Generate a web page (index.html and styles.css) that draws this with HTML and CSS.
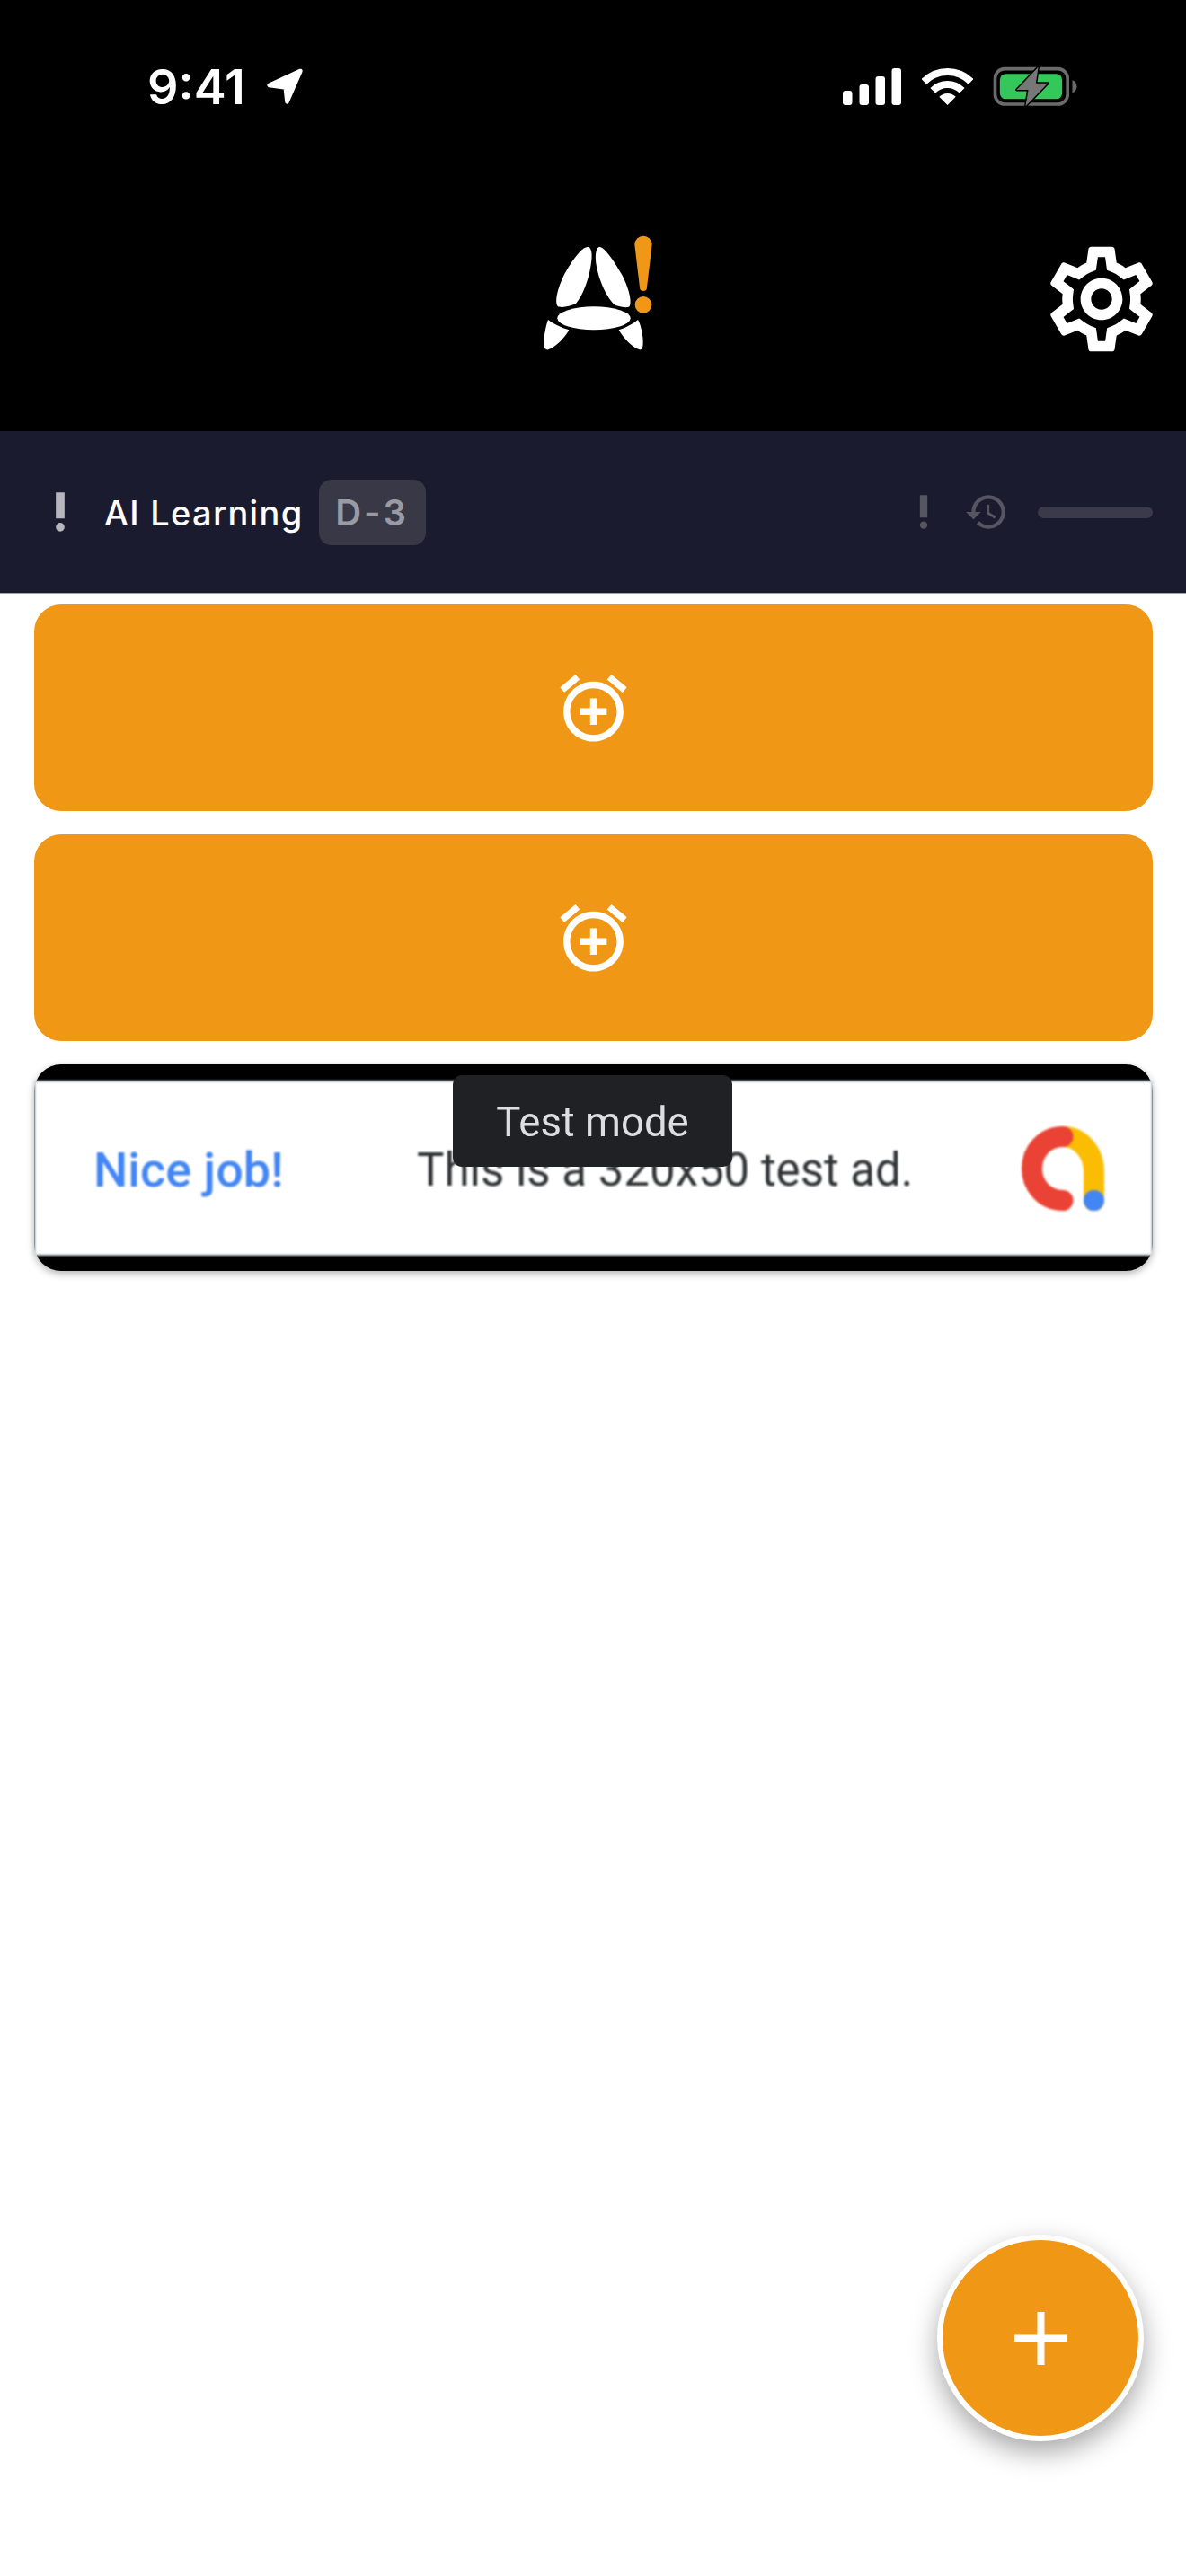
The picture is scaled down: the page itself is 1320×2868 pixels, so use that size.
FILE: index.html
```html
<!DOCTYPE html>
<html lang="en">
<head>
<meta charset="utf-8">
<title>AI Learning</title>
<link rel="stylesheet" href="styles.css">
</head>
<body>
<div class="page">
  <header class="header">
    <div class="status">
      <div class="status-left">
        <span class="time">9:41</span>
        <svg class="loc" viewBox="500 105 145 140"><polygon points="625,122 520,170 575,178 580,226" fill="#fff" stroke="#fff" stroke-width="14" stroke-linejoin="round"/></svg>
      </div>
      <div class="status-right">
        <svg class="signal" viewBox="0 0 65 41"><rect x="0" y="25" width="10.5" height="16" rx="3" fill="#fff"/><rect x="18.5" y="18" width="10.5" height="23" rx="3" fill="#fff"/><rect x="36.5" y="9" width="10.5" height="32" rx="3" fill="#fff"/><rect x="54.5" y="0" width="10.5" height="41" rx="3" fill="#fff"/></svg>
        <svg class="wifi" viewBox="0 0 57 41"><path d="M2.34 14.84A37 37 0 0 1 54.66 14.84M12.24 24.74A23 23 0 0 1 44.76 24.74" fill="none" stroke="#fff" stroke-width="8"/><path d="M28.5 41L19.3 31.8A13 13 0 0 1 37.7 31.8Z" fill="#fff"/></svg>
        <svg class="battery" viewBox="610 60 290 159"><rect x="620" y="80" width="242" height="118" rx="32" fill="none" stroke="#6b6b6b" stroke-width="11"/><rect x="636" y="97" width="208" height="84" rx="20" fill="#34c759"/><path d="M878 118c10 3 15 12 15 21s-5 18-15 21z" fill="#6b6b6b"/><path d="M764 74L692 150H731L722 205L796 128H756Z" fill="#777" stroke="#000" stroke-width="9" stroke-linejoin="round" paint-order="stroke"/></svg>
      </div>
    </div>
    <div class="brand">
      <div></div>
      <svg class="logo" viewBox="0 0 540 510">
        <path fill="#fff" d="M255 105C268 110 268 140 262 170C255 215 235 270 212 295C195 302 165 310 152 303C140 285 155 235 175 195C200 150 235 100 255 105Z"/>
        <path fill="#fff" d="M290 105C278 110 276 140 282 170C290 215 315 275 345 300C365 305 385 310 392 303C402 285 385 230 365 195C340 150 305 100 290 105Z"/>
        <ellipse fill="#fff" cx="273" cy="343" rx="122" ry="39"/>
        <path fill="#fff" d="M120 348C135 360 165 375 190 382C175 410 145 440 120 448C105 450 105 430 107 405C110 385 115 360 120 348Z"/>
        <path fill="#fff" d="M420 348C405 360 380 375 356 382C372 410 400 440 425 448C438 450 438 430 436 405C433 385 428 360 420 348Z"/>
        <path fill="#f09816" d="M409 97a29 29 0 0 1 58 0L450 240a12 12 0 0 1-24 0Z"/>
        <circle fill="#f09816" cx="438" cy="298" r="28"/>
      </svg>
      <svg class="gear" viewBox="0 0 24 24"><path fill="#fff" d="M19.43 12.98c.04-.32.07-.64.07-.98 0-.34-.03-.66-.07-.98l2.11-1.65c.19-.15.24-.42.12-.64l-2-3.46c-.09-.16-.26-.25-.44-.25-.06 0-.12.01-.17.03l-2.49 1c-.52-.4-1.08-.73-1.69-.98l-.38-2.65C14.46 2.18 14.25 2 14 2h-4c-.25 0-.46.18-.49.42l-.38 2.65c-.61.25-1.17.59-1.69.98l-2.49-1c-.06-.02-.12-.03-.18-.03-.17 0-.34.09-.43.25l-2 3.46c-.13.22-.07.49.12.64l2.11 1.65c-.04.32-.07.65-.07.98 0 .33.03.66.07.98l-2.11 1.65c-.19.15-.24.42-.12.64l2 3.46c.09.16.26.25.44.25.06 0 .12-.01.17-.03l2.49-1c.52.4 1.08.73 1.69.98l.38 2.65c.03.24.24.42.49.42h4c.25 0 .46-.18.49-.42l.38-2.65c.61-.25 1.17-.59 1.69-.98l2.49 1c.06.02.12.03.18.03.17 0 .34-.09.43-.25l2-3.46c.12-.22.07-.49-.12-.64l-2.11-1.65zm-1.98-1.71c.04.31.05.52.05.73 0 .21-.02.43-.05.73l-.14 1.13.89.7 1.08.84-.7 1.21-1.27-.51-1.04-.42-.9.68c-.43.32-.84.56-1.25.73l-1.06.43-.16 1.13-.2 1.35h-1.4l-.19-1.35-.16-1.13-1.06-.43c-.43-.18-.83-.41-1.23-.71l-.91-.7-1.06.43-1.27.51-.7-1.21 1.08-.84.89-.7-.14-1.13c-.03-.31-.05-.54-.05-.74s.02-.43.05-.73l.14-1.13-.89-.7-1.08-.84.7-1.21 1.27.51 1.04.42.9-.68c.43-.32.84-.56 1.25-.73l1.06-.43.16-1.13.2-1.35h1.39l.19 1.35.16 1.13 1.06.43c.43.18.83.41 1.23.71l.91.7 1.06-.43 1.27-.51.7 1.21-1.07.85-.89.7.14 1.13zM12 8c-2.21 0-4 1.79-4 4s1.79 4 4 4 4-1.79 4-4-1.79-4-4-4zm0 6c-1.1 0-2-.9-2-2s.9-2 2-2 2 .9 2 2-.9 2-2 2z"/></svg>
    </div>
  </header>

  <section class="bar">
    <svg class="prio prio-on" viewBox="0 0 24 24"><circle cx="12" cy="19" r="2"/><path d="M10 3h4v12h-4z"/></svg>
    <span class="bar-title">AI Learning</span>
    <span class="badge">D-3</span>
    <div class="bar-tools">
      <svg class="prio-small" viewBox="0 0 24 24"><circle cx="12" cy="19" r="2"/><path d="M10 3h4v12h-4z"/></svg>
      <svg class="history" viewBox="0 0 24 24"><path d="M13 3c-4.97 0-9 4.03-9 9H1l3.89 3.89.07.14L9 12H6c0-3.87 3.13-7 7-7s7 3.13 7 7-3.13 7-7 7c-1.93 0-3.68-.79-4.94-2.06l-1.42 1.42C8.27 19.99 10.51 21 13 21c4.97 0 9-4.03 9-9s-4.03-9-9-9zm-1 5v5l4.28 2.54.72-1.21-3.5-2.08V8H12z"/></svg>
      <div class="progress"></div>
    </div>
  </section>

  <main class="list">
    <div class="card-alarm"><svg class="alarm" viewBox="0 0 24 24"><path d="M7.88 3.39L6.6 1.86 2 5.71l1.29 1.53 4.59-3.85zM22 5.72l-4.6-3.86-1.29 1.53 4.6 3.86L22 5.72zM12 4c-4.97 0-9 4.03-9 9s4.02 9 9 9c4.97 0 9-4.03 9-9s-4.03-9-9-9zm0 16c-3.87 0-7-3.13-7-7s3.13-7 7-7 7 3.13 7 7-3.13 7-7 7zm1-11h-2v3H8v2h3v3h2v-3h3v-2h-3V9z"/></svg></div>
    <div class="card-alarm"><svg class="alarm" viewBox="0 0 24 24"><path d="M7.88 3.39L6.6 1.86 2 5.71l1.29 1.53 4.59-3.85zM22 5.72l-4.6-3.86-1.29 1.53 4.6 3.86L22 5.72zM12 4c-4.97 0-9 4.03-9 9s4.02 9 9 9c4.97 0 9-4.03 9-9s-4.03-9-9-9zm0 16c-3.87 0-7-3.13-7-7s3.13-7 7-7 7 3.13 7 7-3.13 7-7 7zm1-11h-2v3H8v2h3v3h2v-3h3v-2h-3V9z"/></svg></div>
    <div class="card-ad">
      <div class="ad">
        <span class="ad-nice">Nice job!</span>
        <span class="ad-text">This is a 320x50 test ad.</span>
        <svg class="ad-logo" viewBox="1137 1253 92 94">
          <path d="M1183 1264.5C1204 1264.5 1217.500 1284 1217.500 1303V1336" fill="none" stroke="#fbbc04" stroke-width="23" stroke-linecap="round"/>
          <path d="M1183 1264.500C1162 1264.500 1148.500 1282 1148.500 1300C1148.500 1318 1162 1335.500 1183 1335.500" fill="none" stroke="#ea4335" stroke-width="23" stroke-linecap="round"/>
          <circle cx="1217.500" cy="1335.500" r="11.500" fill="#4285f4"/>
        </svg>
      </div>
      <div class="tooltip"><span class="tooltip-text">Test mode</span></div>
    </div>
  </main>

  <button class="fab" type="button" aria-label="Add"><svg class="fab-plus" viewBox="0 0 59 59"><path d="M25.500 0h8v25.500H59v8H33.500V59h-8V33.500H0v-8h25.500z"/></svg></button>
</div>
</body>
</html>
```

FILE: styles.css
```css
* { box-sizing: border-box; }
html, body { margin: 0; padding: 0; background: #fff; }
.page { position: relative; width: 1320px; height: 2868px; overflow: hidden; background: #fff; font-family: Inter, "Liberation Sans", sans-serif; }

.header { height: 480px; background: #000; display: flex; flex-direction: column; }
.status { height: 240px; padding: 70px 119px 0 164px; display: flex; justify-content: space-between; align-items: flex-start; }
.status-left { display: flex; align-items: center; gap: 20px; height: 53px; }
.status-right { display: flex; align-items: center; height: 53px; }
.time { color: #fff; font-size: 54px; font-weight: 600; line-height: 53px; letter-spacing: 0; }
.loc { width: 48px; height: 47px; }
.signal { width: 65px; height: 41px; }
.wifi { width: 57px; height: 41px; margin-left: 23px; }
.battery { width: 97px; height: 53px; margin-left: 21px; }

.brand { height: 170px; display: grid; grid-template-columns: 1fr 180px 1fr; padding: 0 24px; }
.logo { width: 180px; height: 170px; display: block; }
.gear { width: 140px; height: 140px; justify-self: end; margin-top: 23px; display: block; }

.bar { height: 181px; background: #1a1b2e; border-bottom: 1px solid #a4a4ae; display: flex; align-items: center; padding: 0 37px 0 38px; }
.prio { width: 58px; height: 58px; fill: #b6b6bc; flex: none; }
.bar-title { color: #fff; font-size: 38px; font-weight: 500; letter-spacing: 1.3px; margin-left: 20px; padding-top: 2px; }
.badge { margin-left: 17px; width: 119px; height: 73px; border-radius: 14px; background: #383846; color: #9a9aa5; font-size: 40px; font-weight: 600; letter-spacing: 3px; display: flex; align-items: center; justify-content: center; }
.bar-tools { margin-left: auto; display: flex; align-items: center; }
.prio-small { width: 50px; height: 50px; fill: #565663; }
.history { width: 50px; height: 50px; fill: #565663; margin-left: 20px; }
.progress { width: 128px; height: 13px; border-radius: 7px; background: #3a3a4a; margin-left: 32px; }

.list { padding: 12px 37px 0 38px; display: flex; flex-direction: column; gap: 26px; }
.card-alarm { height: 230px; border-radius: 30px; background: #f09816; display: flex; align-items: center; justify-content: center; }
.alarm { width: 89px; height: 89px; fill: #fff; }

.card-ad { position: relative; height: 230px; border-radius: 30px; background: #000; padding: 18px 0 17px; box-shadow: 0 3px 8px rgba(0,0,0,.3); }
.ad { height: 195px; background: #fff; border: 2px solid #cdd6dc; display: flex; align-items: center; padding-left: 64px; font-family: Roboto, sans-serif; filter: blur(.8px); }
.ad-nice { color: #4285f4; font-size: 54px; font-weight: 500; width: 209px; flex: none; padding-top: 4px; white-space: nowrap; }
.ad-text { color: #303235; font-size: 51px; margin-left: 151px; width: 552px; flex: none; padding-top: 4px; white-space: nowrap; }
.ad-logo { width: 92px; height: 94px; margin-left: 121px; flex: none; }
.tooltip { position: absolute; left: 466px; top: 12px; width: 311px; height: 102px; border-radius: 10px; background: #202124; color: #dcdee1; font-family: Roboto, sans-serif; font-size: 45.5px; display: flex; align-items: center; justify-content: center; }
.tooltip-text { padding-top: 3px; filter: blur(.3px); }

.fab { position: absolute; left: 1043px; top: 2488px; width: 230px; height: 230px; padding: 0; border-radius: 50%; border: 6px solid #fff; background: #f09816; box-shadow: 0 12px 30px rgba(0,0,0,.35); display: flex; align-items: center; justify-content: center; }
.fab-plus { width: 59px; height: 59px; fill: #fff; }
```
